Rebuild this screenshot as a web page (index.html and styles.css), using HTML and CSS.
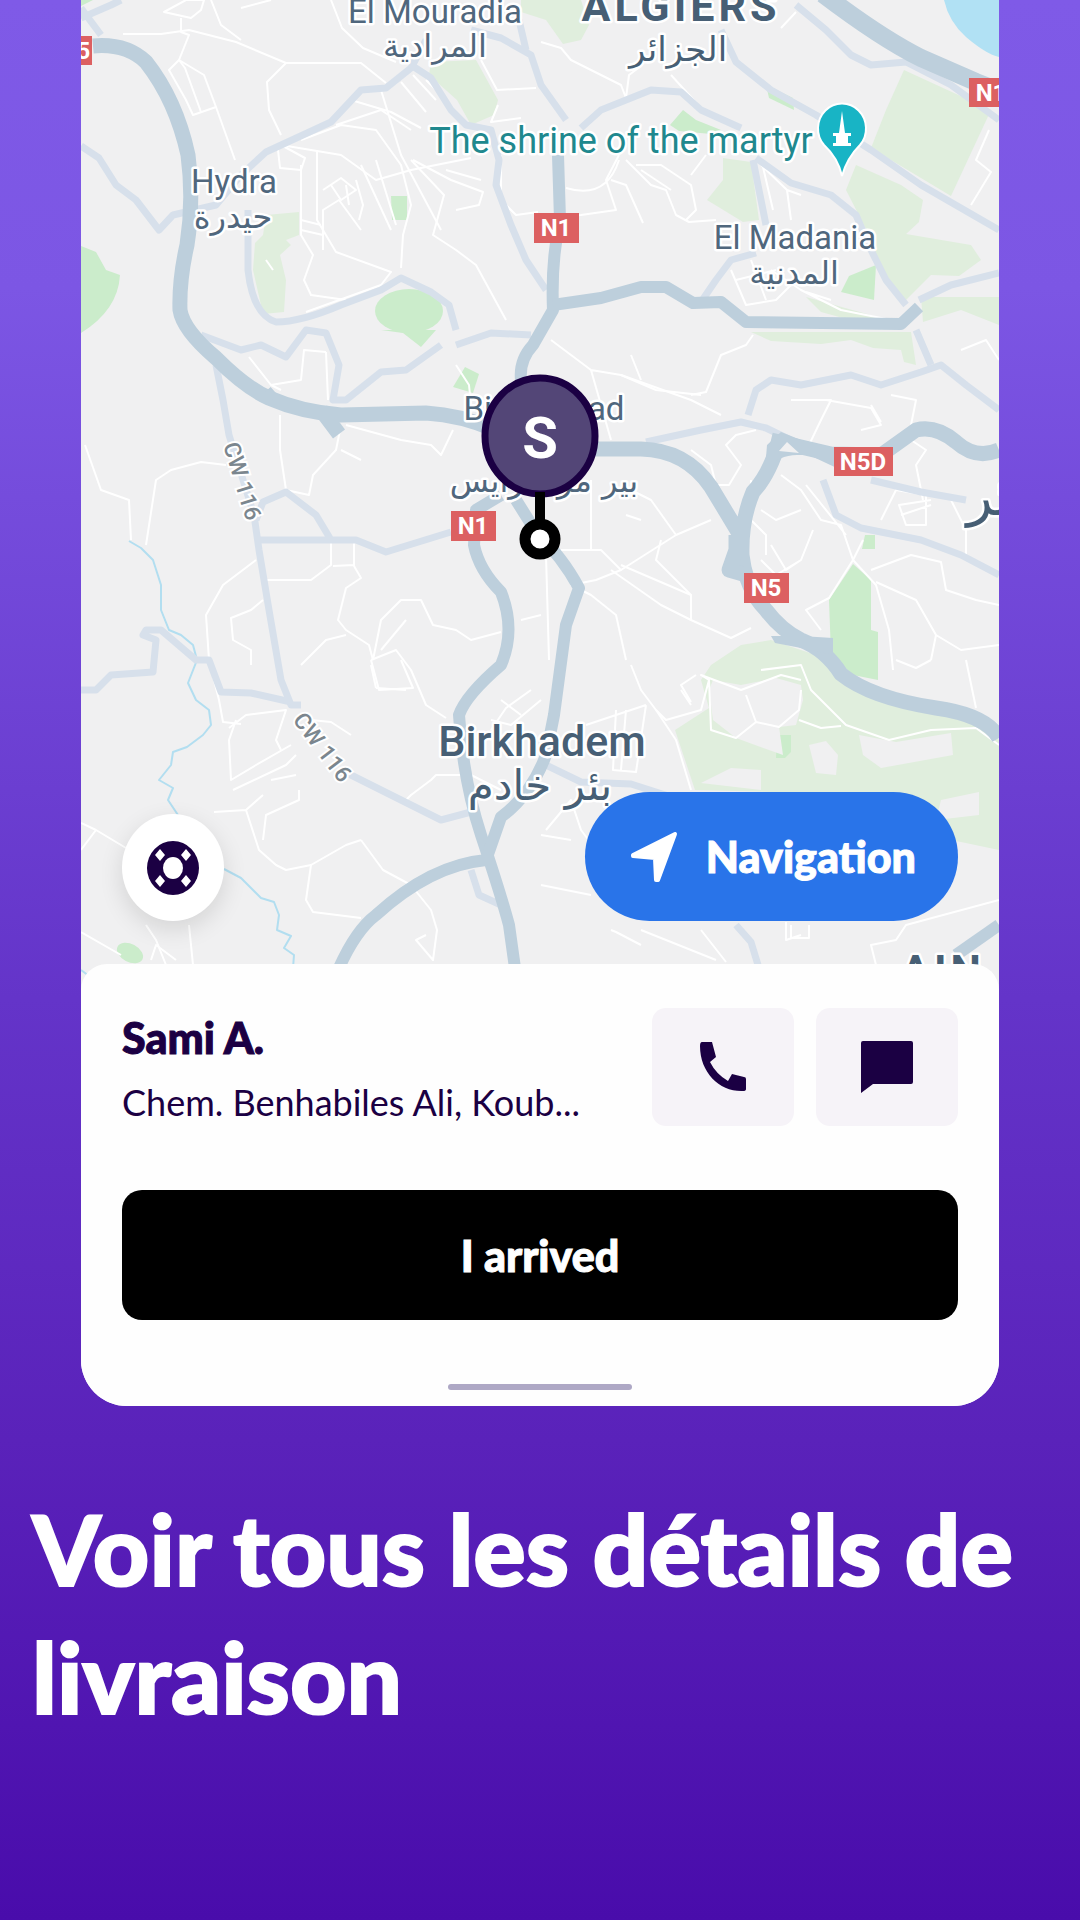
FILE: index.html
```html
<!DOCTYPE html>
<html lang="fr">
<head>
    <meta charset="UTF-8">
    <meta name="viewport" content="width=device-width, initial-scale=1.0">
    <title>Détails de livraison</title>
    <link rel="stylesheet" href="styles.css">
</head>
<body>

    <main class="screen">
        <section class="map">
            <svg class="map-canvas" viewBox="80 0 918 990" role="img" aria-label="Carte d'Alger">
                <rect class="land" x="80" y="0" width="918" height="990"/>

                <!-- water and parks -->
                <path class="sea" d="M943 0 Q948 22 965 37 Q985 54 998 57 V0Z"/>
                <g class="park">
                    <path d="M430 62 L475 60 L497 100 L493 115 L470 125 L456 100 L428 75Z"/>
                    <path d="M520 0 H580 L588 25 L580 40 L562 44 L545 20 L520 12Z"/>
                    <path d="M903 70 L990 110 L950 196 L870 148 L885 110Z"/>
                    <path d="M722 158 L750 162 L758 220 L742 222 L706 200 L722 180Z"/>
                    <path d="M855 165 L900 185 L922 200 L918 222 L905 234 L970 245 L980 260 L958 276 L930 275 L905 300 L885 280 L868 235 L845 190Z"/>
                    <path d="M265 215 L298 212 V235 L285 240 L290 245 L279 255 L285 280 L283 312 L262 314 L252 270 L254 243 L262 235Z"/>
                    <path d="M805 297 L880 318 L842 318 L820 312Z"/>
                    <path d="M920 297 H998 V325 L960 310 L922 322Z"/>
                    <path d="M750 332 H910 L915 365 L903 362 L900 350 L872 348 L850 340 L820 344 L770 341Z"/>
                    <path d="M710 665 L740 645 L770 640 L830 660 L880 692 L975 718 L998 740 V850 L960 842 L920 835 L890 795 L694 790 L674 730 L708 708 L700 680Z"/>
                </g>
                <g class="park bright">
                    <path d="M80 246 L95 252 L105 270 L119 275 Q117 310 80 333Z"/>
                    <path d="M390 196 H406 V220 H391Z"/>
                    <ellipse cx="408" cy="311" rx="34" ry="22"/>
                    <path d="M669 125 L682 110 L695 120 L720 130 L710 134 L678 131Z"/>
                    <path d="M765 85 L792 98 L793 110 L768 98Z"/>
                    <path d="M875 265 L873 300 L840 292 L848 276Z"/>
                    <path d="M380 330 H435 L420 347 L402 333Z"/>
                    <path d="M464 367 L478 374 L472 393 L452 387Z"/>
                    <path d="M864 535 H874 V549 H861Z"/>
                    <path d="M852 564 L870 580 V630 L877 632 V680 L852 675 L830 655 L828 600Z"/>
                    <path d="M776 735 H790 V752 L784 758 H775Z"/>
                    <path d="M80 0 H92 L80 6Z"/>
                    <ellipse cx="129" cy="953" rx="14" ry="9" transform="rotate(28 129 953)"/>
                </g>
                <g class="land">
                    <path d="M708 690 L712 680 L740 685 L775 678 L800 685 L802 700 L795 725 L778 727 L782 755 L735 738 L712 720Z"/>
                    <path d="M808 745 L825 741 L837 755 L835 775 L815 773Z"/>
                    <path d="M858 735 L895 742 L950 733 L952 755 L880 768 L862 755Z"/>
                    <path d="M940 800 L978 792 V815 L935 820Z"/>
                    <path d="M700 783 L730 768 L760 770 V790Z"/>
                    <path d="M878 662 L895 664 L960 672 V705 L920 702 L878 685Z"/>
                </g>

                <!-- streets -->
                <g class="street">
                    <path d="M122 34 H160 L188 30 L235 42 L285 63 H360 L385 83"/>
                    <path d="M163 12 L185 0 H203 L200 10 L190 18Z M180 18 V32 L188 35 L178 60 L184 68 L200 112"/>
                    <path d="M210 0 L220 25 L240 40 M285 63 L266 82 L268 110 L280 135"/>
                    <path d="M178 60 L203 75 L215 107 L234 160"/>
                    <path d="M178 60 L168 70 L185 100 L192 115 L215 107"/>
                    <path d="M330 0 L341 28 L362 48 L395 62 M240 8 L270 0"/>
                    <path d="M277 150 L279 168 L300 170 L304 158 L280 145 L340 155 L375 180 L410 170 L470 158"/>
                    <path d="M300 165 V235 L312 255 L303 280 L310 295 L345 300"/>
                    <path d="M316 150 V220 L335 252 L390 272 L380 285 L305 312 M322 250 V210 L338 200 L360 230"/>
                    <path d="M300 140 L340 125 L375 130 L400 165 L410 205 L402 235 L400 268"/>
                    <path d="M335 125 L380 110 L410 130 M350 100 L390 112 L420 128 M380 90 L400 155 L440 230"/>
                    <path d="M360 165 L390 230 M375 160 L395 225 M355 180 L362 205 L358 220"/>
                    <path d="M322 190 L340 178 L355 190 L340 200 L330 185 M345 185 L348 205"/>
                    <path d="M410 160 L443 195 L432 235 L455 250 L475 265 L505 320"/>
                    <path d="M412 160 L450 180 L482 192 L478 205 L455 210 M445 170 L480 180"/>
                    <path d="M400 82 L425 112 M412 75 L435 100 M425 80 L440 95"/>
                    <path d="M300 220 L320 225 M300 230 L322 235 M265 260 L272 270"/>
                    <path d="M480 60 L496 90 L535 88 M497 105 L490 122 L520 118 M500 155 V200 L515 215 L537 212"/>
                    <path d="M540 42 L560 48 L570 60 L620 85 L625 98 L628 75 L640 66 M670 75 L700 108"/>
                    <path d="M655 22 L640 10 M780 28 L795 12"/>
                    <path d="M565 188 Q605 200 618 160 M618 155 L605 180 L615 210 L580 215 L548 218"/>
                    <path d="M610 180 L625 185 L642 223 M625 160 L650 185 L665 190 L675 215 L688 222 L715 220"/>
                    <path d="M635 165 L660 165 L690 185 L695 210 L685 220 M640 170 L670 190 M690 175 L705 155"/>
                    <path d="M760 165 L786 190 L790 220 M786 190 L800 195 M762 167 L772 210"/>
                    <path d="M988 130 L975 160 L990 172 L970 205"/>
                    <path d="M730 270 L745 305 L775 300 L790 285 M735 280 L775 270 M750 260 L765 300"/>
                    <path d="M805 292 L830 300 M770 270 L800 290 L840 310 L890 320"/>
                    <path d="M550 340 L590 370 L620 375 L690 400 L720 415 M590 370 L610 440 M640 380 L630 355"/>
                    <path d="M690 395 L705 392 L720 355 L745 345 L752 335 M620 375 L655 390 L700 395"/>
                    <path d="M455 365 L468 385 L470 405 M248 357 L270 385 L300 380 L303 350 L325 352"/>
                    <path d="M325 352 L327 400 M270 385 L280 390 M345 425 L400 440 L430 445 L440 455 L452 430"/>
                    <path d="M279 415 V450 L285 490 M340 425 L335 450 L312 475 L308 495 L285 490 M340 450 L360 460"/>
                    <path d="M84 445 L100 490 L128 500 L130 540 M145 545 L155 480 L170 470 L200 462 L225 465"/>
                    <path d="M265 580 H310 L330 565 V540 M353 538 V565 L332 566 M353 566 L360 578 L345 588 L337 620 L345 630 L368 645 L372 660"/>
                    <path d="M255 560 L222 585 L205 615 L208 660 L218 700 L222 722 L240 724"/>
                    <path d="M262 600 L250 610 L230 618 L232 640 L250 650 L250 665 M372 660 L380 620 L400 600 L420 600 L432 625 L455 630 L470 640 L500 632"/>
                    <path d="M380 650 L405 620 M370 660 L395 650 L410 670 L425 705 L445 718 M375 688 L370 665 M375 688 L405 690"/>
                    <path d="M520 620 L540 615 M300 665 L325 640 L345 635"/>
                    <path d="M545 555 L548 660 M560 550 L600 550 L620 570 L595 580 L570 585 L590 595 L615 615 L625 660"/>
                    <path d="M620 570 L675 535 L710 520 M675 535 L650 500 L630 490 M610 570 L660 605 L690 620 L730 638 L750 628 M690 620 L690 595 L620 565"/>
                    <path d="M660 540 L655 560 L690 595 M590 480 L590 550 M640 520 L625 515 M690 450 L710 465 L715 485 L728 485 L740 465 L725 445 L735 435 L755 430"/>
                    <path d="M780 475 L800 490 L820 520 L840 525 L852 560 M805 485 L845 535 M760 510 L775 520 L800 510"/>
                    <path d="M760 560 L775 575 L800 560 L812 530 M750 480 V520 L765 535 L765 555 M770 545 L785 570 L800 560"/>
                    <path d="M852 560 L828 598 L805 610 L820 630 M862 540 L852 560 L875 585 L888 630 L892 670"/>
                    <path d="M875 582 L915 600 L935 635 L930 660 M870 570 L910 555 L940 562 L945 590 L975 600 L998 605 M935 635 L960 650 L998 645"/>
                    <path d="M880 520 L895 490 L925 495 L925 525 L905 525 L898 505 L930 500 M900 515 L930 505 M950 500 L965 530 L965 555"/>
                    <path d="M790 400 L830 400 L820 420 L808 445 M825 400 L870 408 L880 425 L860 430 M870 405 L880 422 M890 395 L915 400 L910 425"/>
                    <path d="M910 440 L925 450 L915 465 L922 500 M960 350 L985 340 L998 360"/>
                    <path d="M630 665 L640 690 L655 710 L675 740 L690 790 M585 725 L645 705 M615 710 L612 770 L635 772 L645 705 M625 710 L620 770"/>
                    <path d="M655 710 L665 720 L700 710 L708 680 L700 675 L740 690 L780 675 L800 680 M708 680 L710 730 L735 738 L755 722 L745 695 M755 722 L778 727 L798 710 L800 690"/>
                    <path d="M760 670 L800 665 L810 690 L835 715 L845 725 L888 740 L930 730 L975 728 L998 745"/>
                    <path d="M798 720 L820 728 L840 726 M680 690 L690 705 M695 675 L680 685 L690 702"/>
                    <path d="M965 660 L975 708 M895 660 L915 668 L930 660"/>
                    <path d="M235 720 L228 740 L230 780 L255 765 L290 745 M232 790 L285 765 L295 755 M270 780 L295 775 M298 790 V800 L265 815 L262 840"/>
                    <path d="M228 728 L245 715 L285 710 L275 740 L280 750 M213 812 L245 810 L262 795 M245 810 L258 850 L275 865 L285 870 L310 865 L345 845 L360 840"/>
                    <path d="M310 865 L305 900 L312 912 L360 918 M360 840 L382 870 L410 885 L430 910 L436 930 L432 960 L415 940 L425 935"/>
                    <path d="M310 720 L330 722 L350 735 M405 800 L410 795 L430 780 L435 775 L470 775 L500 790"/>
                    <path d="M80 823 L95 830 L125 848 M80 850 L95 830 M80 932 L120 955 M145 925 L155 940 L165 965 M188 925 L192 965"/>
                    <path d="M150 960 L155 945 L175 960 M640 945 L615 932 L610 930 M640 930 L715 960 M700 930 L725 962 M785 922 V940 L800 935 M790 925 V938 H808 V925"/>
                    <path d="M540 835 L570 840 M540 885 L590 895 M545 830 L570 800 L580 830 L595 850 M998 900 L905 925 L895 940 L870 945 L875 965"/>
                    <path d="M490 730 L505 708 L530 690 M490 720 L510 725 L540 700 M500 700 L520 715 M370 660 L378 690 L412 688 L400 660"/>
                </g>

                <!-- rivers -->
                <path class="river" d="M128 541 L140 548 L152 560 L160 585 L160 610 L168 630 L180 635 L192 645 L196 660 L187 683 L195 700 L208 710 L210 725 L202 735 L186 747 L172 752 L170 765 L158 780 L172 788 L167 800 L177 815"/>
                <path class="river" d="M223 869 L240 878 L260 898 L273 902 L278 915 L276 930 L290 936 L283 948 L293 955 L292 968 M80 970 L88 976"/>

                <!-- secondary roads -->
                <g class="road">
                    <path d="M80 18 L110 5 L120 0 M80 8 L100 35"/>
                    <path d="M80 146 L98 158 L115 185 L135 200 L158 230 L172 215 L215 205 L240 175 L265 152 L330 122 L360 90 L385 88 L410 68 L425 40"/>
                    <path d="M247 210 V270 Q252 315 275 322 Q300 322 340 305 L380 290 L400 278 L430 292 L448 305 L455 330"/>
                    <path d="M410 65 L430 78 L450 110 L465 125 L490 130 L498 160 L495 185 L510 225 L525 260 L545 290"/>
                    <path d="M470 30 L500 38 L530 55 L540 85 L565 120 M518 20 L525 50"/>
                    <path d="M580 128 L600 110 L630 98 L650 90 L680 92 L700 110 L740 128"/>
                    <path d="M720 30 L735 62 L770 90 L815 115 L870 150 L920 185 L998 230"/>
                    <path d="M795 5 L825 30 L850 55 L870 65 L905 62 L950 85 L998 120"/>
                    <path d="M752 160 L760 200 L765 225 M755 158 L790 183 L830 195 L855 215 L870 250 L885 280 L905 305"/>
                    <path d="M700 302 L715 280 L730 260 L755 253 M918 300 L950 285 L998 273"/>
                    <path d="M455 345 L490 333 L530 335 M200 335 L240 350 L260 345 L285 357 L305 330 L325 333 L338 365 L332 400 L345 400 L380 372 L405 370 L440 345"/>
                    <path d="M215 365 L222 400 L228 435 L253 515 L258 550 L268 610 L280 680 L290 705 L300 705"/>
                    <path d="M255 520 L262 502 L285 492 L315 515 L330 540 M258 540 H355 L385 552 L450 532"/>
                    <path d="M80 690 L95 690 L110 675 L152 672 L155 640 L142 635 L145 630 L160 630 L195 660 L208 660 L220 692 L250 693 L290 702"/>
                    <path d="M340 770 L400 800 L440 820 L470 812"/>
                    <path d="M645 442 L700 430 L740 422 L765 428 L800 445 M747 415 L755 390 L770 380 L800 385 L850 375 L880 385 L920 372 L940 365 L965 385 L998 410"/>
                    <path d="M915 330 L930 365 M822 480 L835 515 L860 528 L920 540 L960 555 L998 575 M870 480 L920 492 L965 500"/>
                    <path d="M545 765 L580 782 L630 784 L680 800 M735 925 L750 942 L757 965"/>
                    <path d="M470 870 L478 895 L500 905"/>
                </g>

                <!-- main roads -->
                <g class="highway">
                    <path d="M92 46 Q125 43 145 62 Q175 100 187 155 Q193 200 186 245 Q178 280 179 310 Q182 330 215 358 Q245 388 268 398 Q300 412 340 415 L425 413 Q460 415 495 430"/>
                    <path d="M320 410 L338 434 M264 392 L271 400"/>
                    <path d="M580 449 H640 Q685 450 710 487 L742 540 M778 442 Q768 475 752 492 Q740 520 741 555 Q745 590 765 610 Q780 630 800 640 Q825 650 840 674 Q870 698 935 708 Q985 715 998 738"/>
                    <path d="M770 440 L830 454 L880 455 L915 430 Q935 425 955 442 Q975 460 998 450"/>
                    <path d="M735 535 V550 L728 570 L742 574"/>
                </g>
                <g class="highway narrow">
                    <path d="M557 155 L559 220 Q550 260 552 310 L532 345 Q518 360 520 380"/>
                    <path d="M552 305 L600 298 L640 287 H665 L692 303 L720 302 L745 322 L900 324 L918 307"/>
                    <path d="M500 495 L475 510 L473 545 Q478 570 500 592 Q515 630 500 665 Q465 695 458 715 Q462 780 480 835 Q500 895 508 925 L514 968"/>
                    <path d="M515 500 L537 535 Q560 555 578 588 L565 625 L553 715 L545 755 Q530 795 500 817 L485 860 Q430 865 375 915 Q355 930 338 968"/>
                    <path d="M955 955 L998 925"/>
                </g>
                <path class="highway wide" d="M822 -6 Q880 38 920 58 L975 82 L1000 92"/>
                <path class="junction" d="M770 636 H800 L832 638 V655 L800 648 L774 643Z"/>
                <path class="junction" d="M764 470 Q778 455 796 455 L808 455 L840 470 V450 L800 440 L780 432 L766 445Z"/>
                <path class="land" d="M778 451 L786 442 L798 453Z M783 546 l4 8 h-5z"/>

                <!-- place names -->
                <g class="label">
                    <text x="434" y="23">El Mouradia</text>
                    <text x="434" y="57" class="arabic">المرادية</text>
                    <text x="233" y="193">Hydra</text>
                    <text x="232" y="228" class="arabic">حيدرة</text>
                    <text x="794" y="249">El Madania</text>
                    <text x="793" y="284" class="arabic">المدنية</text>
                    <text x="543" y="420">Bir Mourad</text>
                    <text x="543" y="492" class="arabic">بير مراد رايس</text>
                </g>
                <g class="label city">
                    <text x="680" y="21" class="capital">ALGIERS</text>
                    <text x="677" y="61" class="arabic">الجزائر</text>
                    <text x="541" y="756">Birkhadem</text>
                    <text x="539" y="800" class="arabic large">بئر خادم</text>
                    <text x="988" y="515" class="arabic huge">ئر</text>
                    <text x="900" y="985" class="capital start">AIN NAADJA</text>
                </g>
                <text class="label landmark" x="620" y="153">The shrine of the martyr</text>
                <text class="road-name" transform="translate(222 445) rotate(73)">CW 116</text>
                <text class="road-name" transform="translate(291 720) rotate(53)">CW 116</text>

                <!-- landmark pin -->
                <g>
                    <path class="landmark-pin" d="M841 176 Q837 158 823 145 A24 25 0 1 1 859 145 Q846 158 841 176Z"/>
                    <path class="pin-tower" d="M841 111 L844 133 H850 V136 H847 V143 H850 V146 H832 V143 H835 V136 H832 V133 H838Z"/>
                </g>

                <!-- road numbers -->
                <g class="shield">
                    <rect x="60" y="36" width="31" height="29"/><text x="74" y="59">N5</text>
                    <rect x="533" y="213" width="45" height="30"/><text x="555" y="236">N1</text>
                    <rect x="968" y="78" width="45" height="29"/><text x="990" y="101">N1</text>
                    <rect x="450" y="511" width="45" height="30"/><text x="472" y="534">N1</text>
                    <rect x="833" y="447" width="59" height="29"/><text x="862" y="470">N5D</text>
                    <rect x="743" y="573" width="45" height="30"/><text x="765" y="596">N5</text>
                </g>

                <!-- customer marker -->
                <g class="marker">
                    <circle class="marker-foot" cx="539" cy="539" r="15"/>
                    <ellipse class="marker-head" cx="539" cy="436" rx="55" ry="58"/>
                    <path class="marker-stem" d="M539 492 V522"/>
                    <text x="539" y="458">S</text>
                </g>
            </svg>

            <div class="map-actions">
                <button type="button" class="help" aria-label="Aide">
                    <svg width="52" height="54" viewBox="0 0 52 54">
                        <ellipse cx="26" cy="27" rx="26" ry="27" fill="#1b0043"/>
                        <path d="M13 8 l5 6 -5 6 -5 -6z M39 8 l5 6 -5 6 -5 -6z M13 34 l5 6 -5 6 -5 -6z M39 34 l5 6 -5 6 -5 -6z" fill="#fff"/>
                        <ellipse cx="26" cy="27" rx="13" ry="14" fill="#1b0043"/>
                        <ellipse cx="26" cy="27" rx="10" ry="11" fill="#fff"/>
                    </svg>
                </button>
                <button type="button" class="navigation">
                    <svg width="48" height="52" viewBox="0 0 48 52">
                        <path d="M45 3 L3 24 V25 L25 27 L26 49 H28Z" fill="#fff" stroke="#fff" stroke-width="4" stroke-linejoin="round"/>
                    </svg>
                    Navigation
                </button>
            </div>
        </section>

        <section class="sheet">
            <div class="customer">
                <div class="customer-info">
                    <h2>Sami A.</h2>
                    <p>Chem. Benhabiles Ali, Koub...</p>
                </div>
                <button type="button" class="contact" aria-label="Appeler">
                    <svg width="46" height="50" viewBox="0 0 46 50">
                        <path d="M2 0 H12 L16 15 L10 20 Q16 32 28 39 L32 32 L44 35 Q46 35 46 37 V47 Q46 49 43 49 C20 50 0 31 0 4 Q0 0 2 0Z" fill="#1b0043"/>
                    </svg>
                </button>
                <button type="button" class="contact" aria-label="Envoyer un message">
                    <svg width="52" height="54" viewBox="0 0 52 54">
                        <path d="M2 1 H50 Q52 1 52 3 V42 Q52 44 50 44 H12 L0 53 V3 Q0 1 2 1Z" fill="#1b0043"/>
                    </svg>
                </button>
            </div>
            <button type="button" class="arrived">I arrived</button>
            <div class="handle"></div>
        </section>
    </main>

    <h1>Voir tous les détails de livraison</h1>

</body>
</html>
```
FILE: styles.css
```css
* {
    box-sizing: border-box;
}

body {
    margin: 0;
    min-height: 100vh;
    font-family: Lato, 'Liberation Sans', sans-serif;
    font-variant-ligatures: none;
    color: #1b0043;
    background: linear-gradient(180deg, #7f5ae7 0%, #7c56e4 15%, #6434c9 52%, #5a22ba 75%, #490cab 100%);
}

button {
    border: none;
    padding: 0;
    font-family: inherit;
    font-weight: 900;
    color: #fff;
    cursor: pointer;
    display: flex;
    align-items: center;
    justify-content: center;
}

h1, h2, button {
    -webkit-text-stroke: 1px currentColor;
}

.screen {
    width: 85%;
    margin: 0 auto;
    background: #fefefe;
    border-radius: 0 0 46px 46px;
    overflow: hidden;
}

/* map */
.map {
    position: relative;
}

.map-canvas {
    display: block;
    width: 100%;
    font-family: Roboto, 'DejaVu Sans', sans-serif;
    text-anchor: middle;
}

.land { fill: #f0f0f1; }
.sea { fill: #b1e1f4; }
.park { fill: #e0eedd; }
.park.bright { fill: #cbeccb; }

.street, .river, .road, .highway {
    fill: none;
    stroke-linejoin: round;
}

.street {
    stroke: #fff;
    stroke-width: 2;
}

.river {
    stroke: #b2def0;
    stroke-width: 2;
}

.road {
    stroke: #d7e0eb;
    stroke-width: 7;
}

.highway {
    stroke: #bdcfdc;
    stroke-width: 15;
}

.highway.narrow { stroke-width: 12; }
.highway.wide { stroke-width: 18; }
.junction { fill: #bdcfdc; }

.label {
    font-size: 33px;
    fill: #50677d;
    stroke: #fff;
    stroke-width: 5px;
    stroke-linejoin: round;
    paint-order: stroke;
}

.label .arabic {
    font-family: 'DejaVu Sans', sans-serif;
    font-size: 32px;
}

.label.city {
    font-size: 43px;
    font-weight: 500;
    fill: #475f75;
}

.label.city .arabic {
    font-size: 34px;
    font-weight: 400;
}

.label.city .large { font-size: 42px; }
.label.city .huge { font-size: 54px; }

.label .capital {
    font-weight: 700;
    letter-spacing: 4px;
}

.label .start { text-anchor: start; }

.label.landmark {
    font-size: 36px;
    fill: #20888e;
}

.road-name {
    font-size: 23px;
    font-weight: 500;
    text-anchor: start;
    fill: #7b868e;
    stroke: #fff;
    stroke-width: 4px;
    paint-order: stroke;
}

.landmark-pin {
    fill: #18b4c5;
    stroke: #fff;
    stroke-width: 2;
}

.pin-tower { fill: #fff; }

.shield rect { fill: #dc6061; }

.shield text {
    font-size: 24px;
    font-weight: 700;
    fill: #fff;
}

.marker-head {
    fill: #534677;
    stroke: #1b0043;
    stroke-width: 7;
}

.marker-stem {
    stroke: #000;
    stroke-width: 10;
}

.marker-foot {
    fill: #fff;
    stroke: #000;
    stroke-width: 11;
}

.marker text {
    font-family: Roboto, sans-serif;
    font-size: 58px;
    font-weight: 700;
    fill: #fff;
}

.map-actions {
    position: absolute;
    left: 41px;
    right: 41px;
    bottom: 69px;
    display: flex;
    align-items: flex-end;
    justify-content: space-between;
}

.help {
    width: 102px;
    height: 107px;
    border-radius: 50%;
    background: #fff;
    box-shadow: 0 8px 24px rgba(0, 0, 0, 0.12);
}

.navigation {
    height: 129px;
    padding: 0 42px 0 45px;
    gap: 28px;
    border-radius: 65px;
    background: #2974e9;
    font-size: 43px;
}

/* bottom sheet */
.sheet {
    position: relative;
    margin-top: -26px;
    padding: 44px 41px 16px;
    background: #fefefe;
    border-radius: 26px 26px 0 0;
}

.customer {
    display: flex;
    gap: 22px;
}

.customer-info {
    flex: 1;
    min-width: 0;
}

.customer h2 {
    margin: 4px 0 0;
    font-size: 43px;
    line-height: 52px;
    font-weight: 900;
}

.customer p {
    margin: 16px 0 0;
    font-size: 36px;
    line-height: 44px;
    white-space: nowrap;
}

.contact {
    width: 142px;
    height: 118px;
    border-radius: 14px;
    background: #f6f3f8;
}

.arrived {
    width: 100%;
    height: 130px;
    margin-top: 64px;
    border-radius: 20px;
    background: #000;
    font-size: 43px;
}

.handle {
    width: 184px;
    height: 6px;
    margin: 64px auto 0;
    border-radius: 3px;
    background: #aea8c5;
}

h1 {
    margin: 78px 32px 0;
    font-size: 98px;
    line-height: 128px;
    font-weight: 900;
    color: #fff;
    -webkit-text-stroke-width: 2px;
}
```
